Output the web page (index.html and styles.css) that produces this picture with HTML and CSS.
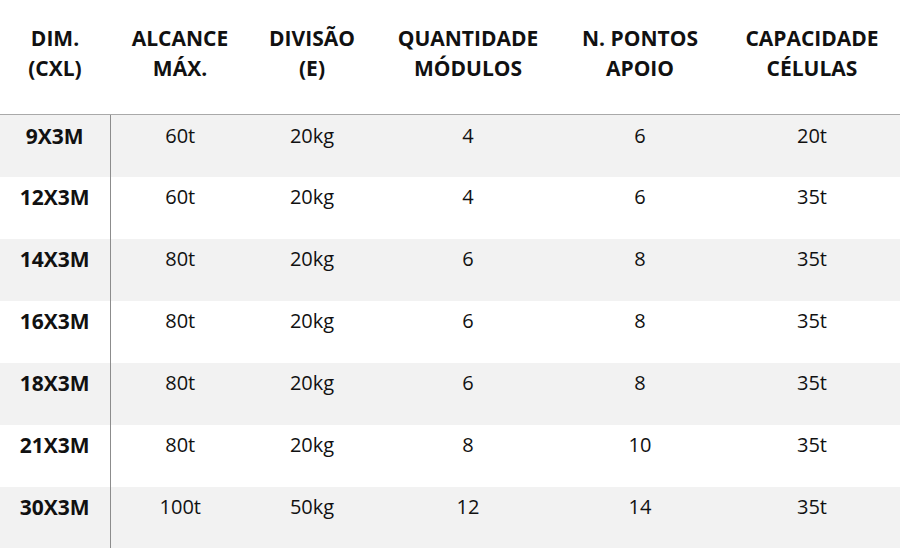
FILE: index.html
```html
<!DOCTYPE html>
<html lang="pt">
<head>
<meta charset="utf-8">
<link rel="stylesheet" href="styles.css">
</head>
<body>
<table class="spec">
  <colgroup>
    <col class="c1"><col class="c2"><col class="c3"><col class="c4"><col class="c5"><col class="c6">
  </colgroup>
  <thead>
    <tr>
      <th>DIM.<br>(CXL)</th>
      <th>ALCANCE<br>MÁX.</th>
      <th>DIVISÃO<br>(E)</th>
      <th>QUANTIDADE<br>MÓDULOS</th>
      <th>N. PONTOS<br>APOIO</th>
      <th>CAPACIDADE<br>CÉLULAS</th>
    </tr>
  </thead>
  <tbody>
    <tr class="alt first"><td class="dim">9X3M</td><td>60t</td><td>20kg</td><td>4</td><td>6</td><td>20t</td></tr>
    <tr><td class="dim">12X3M</td><td>60t</td><td>20kg</td><td>4</td><td>6</td><td>35t</td></tr>
    <tr class="alt"><td class="dim">14X3M</td><td>80t</td><td>20kg</td><td>6</td><td>8</td><td>35t</td></tr>
    <tr><td class="dim">16X3M</td><td>80t</td><td>20kg</td><td>6</td><td>8</td><td>35t</td></tr>
    <tr class="alt"><td class="dim">18X3M</td><td>80t</td><td>20kg</td><td>6</td><td>8</td><td>35t</td></tr>
    <tr><td class="dim">21X3M</td><td>80t</td><td>20kg</td><td>8</td><td>10</td><td>35t</td></tr>
    <tr class="alt"><td class="dim">30X3M</td><td>100t</td><td>50kg</td><td>12</td><td>14</td><td>35t</td></tr>
  </tbody>
</table>
</body>
</html>
```
FILE: styles.css
```css
html, body {
  margin: 0;
  padding: 0;
  background: #ffffff;
  overflow: hidden;
}
body {
  font-family: "Open Sans", "Noto Sans", sans-serif;
  color: #111111;
}
.spec {
  border-collapse: collapse;
  table-layout: fixed;
  width: 906px;
}
.c1 { width: 110px; }
.c2 { width: 140px; }
.c3 { width: 124px; }
.c4 { width: 188px; }
.c5 { width: 156px; }
.c6 { width: 188px; }
.spec th {
  font-size: 21px;
  font-weight: 700;
  line-height: 30px;
  height: 114px;
  padding: 23px 0 0;
  text-align: center;
  vertical-align: top;
  border-bottom: 1px solid #a9a9a9;
  box-sizing: border-box;
}
.spec td {
  font-size: 20px;
  line-height: 28px;
  height: 62px;
  padding: 6px 0 0;
  box-sizing: border-box;
  text-align: center;
  vertical-align: top;
}
.spec tr.first td {
  height: 63px;
  padding-top: 7px;
}
.spec td.dim {
  font-size: 21px;
  font-weight: 700;
  border-right: 1px solid #8c8c8c;
}
.spec tr.alt td {
  background: #f2f2f2;
}
```
